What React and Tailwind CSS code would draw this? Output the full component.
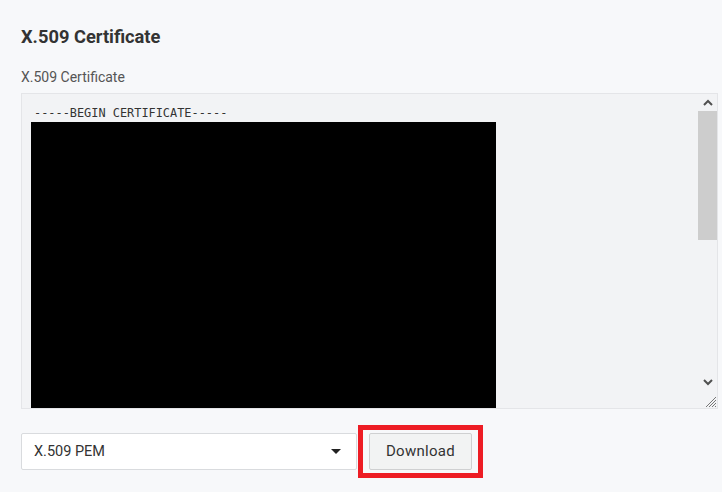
export default function App() {
  return (
    <div className="min-h-[492px] bg-[#f7f8fa] pl-[21px] pr-[4px] pt-[26px] font-['Roboto',sans-serif]">
      <h2 className="text-[18.3px] font-bold text-[#333] leading-[22px]">X.509 Certificate</h2>
      <div className="mt-[21px] text-[14px] leading-[17px] text-[#555]">X.509 Certificate</div>
      <div className="mt-[7px] h-[316px] border border-[#e4e5e8] bg-[#f2f3f5] flex overflow-hidden">
        <div className="flex-1 pl-[9px] pt-[11px] overflow-hidden">
          <div className="pl-[3px] font-['DejaVu_Sans_Mono',monospace] text-[11.9px] leading-[17px] text-[#333]">
            -----BEGIN CERTIFICATE-----
          </div>
          <div className="w-[465px] h-[300px] bg-black"></div>
        </div>
        <div className="w-[19px] flex flex-col bg-[#f2f3f5]">
          <div className="h-[17px] grid place-items-center">
            <svg width="10" height="7" viewBox="0 0 10 7">
              <path d="M1 6 L5 2 L9 6" fill="none" stroke="#505050" strokeWidth="2" />
            </svg>
          </div>
          <div className="h-[129px] bg-[#cdcdcd]"></div>
          <div className="flex-1"></div>
          <div className="h-[17px] grid place-items-center">
            <svg width="10" height="7" viewBox="0 0 10 7">
              <path d="M1 1 L5 5 L9 1" fill="none" stroke="#505050" strokeWidth="2" />
            </svg>
          </div>
          <div className="h-[17px] flex items-end justify-end">
            <svg width="14" height="14" viewBox="0 0 14 14">
              <path d="M13 3 L3 13 M13 6 L6 13 M13 9 L9 13 M13 12 L12 13" stroke="#777" strokeWidth="1" />
            </svg>
          </div>
        </div>
      </div>
      <div className="mt-[16px] flex items-center gap-[1px]">
        <div className="w-[336px] h-[37px] bg-white border border-[#d9dbde] rounded-[2px] flex items-center justify-between pl-[12px] pr-[15px]">
          <span className="text-[14.5px] text-[#333]">X.509 PEM</span>
          <svg width="10" height="5" viewBox="0 0 10 5">
            <path d="M0 0 L10 0 L5 5 Z" fill="#222" />
          </svg>
        </div>
        <div className="border-[5px] border-[#ed1c24] px-[6px] py-[3px]">
          <button className="w-[103px] h-[37px] bg-[#f2f3f3] border border-[#cfd0d1] rounded-[2px] text-[15px] text-[#333] tracking-[0.3px]">
            Download
          </button>
        </div>
      </div>
    </div>
  );
}
